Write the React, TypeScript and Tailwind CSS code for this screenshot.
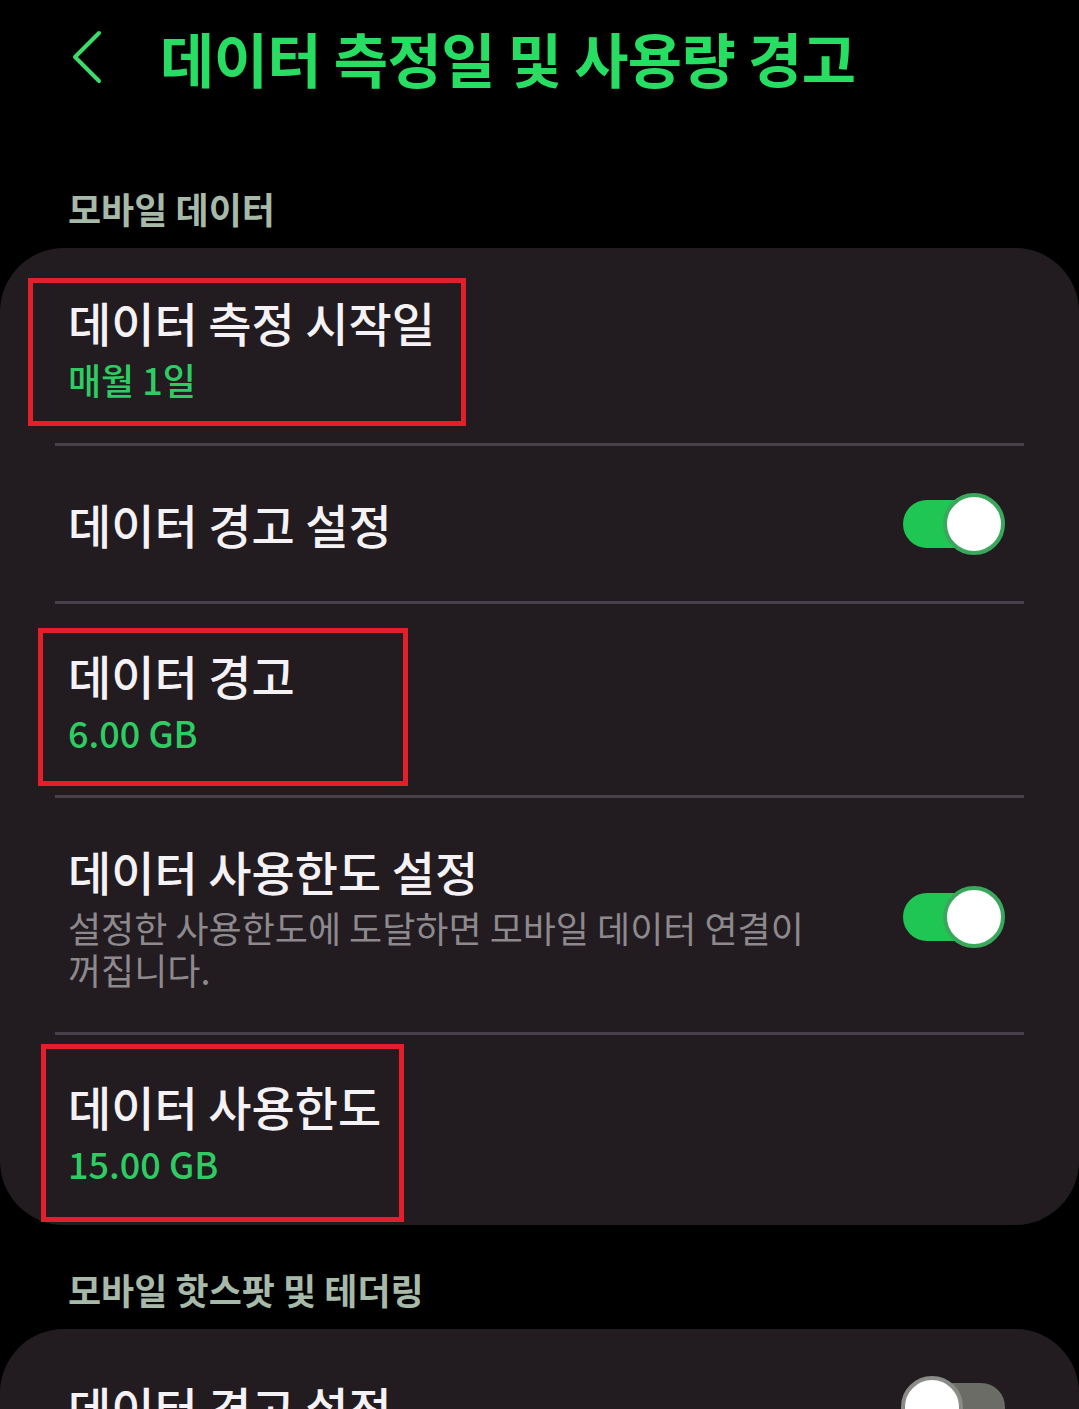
import type { ReactNode } from "react";

const font = { fontFamily: '"Noto Sans CJK KR", "Noto Sans", sans-serif' };

type Mark = { left: number; top: number; width: number; height: number };

function Toggle({ on }: { on: boolean }) {
  return (
    <div className="relative h-[62px] w-[102px] shrink-0">
      <div
        className={`absolute top-[7px] h-[48px] w-[90px] rounded-full ${
          on ? "left-0 bg-[#1fc654]" : "left-[12px] bg-[#6b6c66]"
        }`}
      />
      <div
        className={`absolute top-0 h-[62px] w-[62px] rounded-full border-[4px] bg-white ${
          on ? "left-[40px] border-[#3aa85c]" : "left-[-2px] border-[#8b8b88]"
        }`}
      />
    </div>
  );
}

function Row({
  title,
  sub,
  desc,
  toggle,
  mark,
  className,
}: {
  title: string;
  sub?: string;
  desc?: ReactNode;
  toggle?: boolean;
  mark?: Mark;
  className: string;
}) {
  return (
    <div className={`relative flex items-center justify-between pl-[13px] pr-[19px] ${className}`}>
      <div className="flex min-w-0 flex-col">
        <div className="text-[47px] font-medium leading-[56px] text-[#f4f2f4]">{title}</div>
        {sub && (
          <div className="mt-[7px] text-[36px] font-medium leading-[44px] text-[#2ecc62]">{sub}</div>
        )}
        {desc && (
          <div className="mt-[7px] max-w-[800px] break-keep text-[36px] leading-[42px] text-[#8d898d]">
            {desc}
          </div>
        )}
      </div>
      {toggle !== undefined && <Toggle on={toggle} />}
      {mark && (
        <div
          className="pointer-events-none absolute border-[5px] border-[#e21f2a]"
          style={{ left: mark.left, top: mark.top, width: mark.width, height: mark.height }}
        />
      )}
    </div>
  );
}

function Divider() {
  return <div className="h-[3px] bg-[#46414a]" />;
}

export default function App() {
  return (
    <div className="h-[1409px] w-[1079px] overflow-hidden bg-black" style={font}>
      {/* header */}
      <div className="flex h-[112px] items-center pl-[72px] pt-[2px]">
        <svg width="32" height="54" viewBox="0 0 32 54" className="shrink-0">
          <path
            d="M27 3 L3 27 L27 51"
            fill="none"
            stroke="#3cdc6a"
            strokeWidth="4"
            strokeLinecap="round"
            strokeLinejoin="round"
          />
        </svg>
        <h1 className="ml-[56px] text-[59px] font-bold leading-none tracking-[-0.6px] text-[#27de62]">
          데이터 측정일 및 사용량 경고
        </h1>
      </div>

      <div className="flex h-[136px] items-center pl-[68px] pt-[56px] text-[36px] font-bold text-[#a7b9a8]">
        모바일 데이터
      </div>

      <div className="rounded-[64px] bg-[#221c21] px-[55px]">
        <Row
          title="데이터 측정 시작일"
          sub="매월 1일"
          className="pt-[46px] pb-[42px]"
          mark={{ left: -27, top: 30, width: 438, height: 148 }}
        />
        <Divider />
        <Row title="데이터 경고 설정" toggle className="h-[155px]" />
        <Divider />
        <Row
          title="데이터 경고"
          sub="6.00 GB"
          className="pt-[43px] pb-[41px]"
          mark={{ left: -17, top: 24, width: 370, height: 158 }}
        />
        <Divider />
        <Row
          title="데이터 사용한도 설정"
          desc="설정한 사용한도에 도달하면 모바일 데이터 연결이 꺼집니다."
          toggle
          className="pt-[45px] pb-[42px]"
        />
        <Divider />
        <Row
          title="데이터 사용한도"
          sub="15.00 GB"
          className="pt-[43px] pb-[40px]"
          mark={{ left: -14, top: 9, width: 363, height: 178 }}
        />
      </div>

      <div className="flex h-[104px] items-center pl-[68px] pt-[24px] text-[36px] font-bold text-[#a7b9a8]">
        모바일 핫스팟 및 테더링
      </div>

      <div className="rounded-t-[64px] bg-[#221c21] px-[55px]">
        <Row title="데이터 경고 설정" toggle={false} className="h-[155px]" />
      </div>
    </div>
  );
}
